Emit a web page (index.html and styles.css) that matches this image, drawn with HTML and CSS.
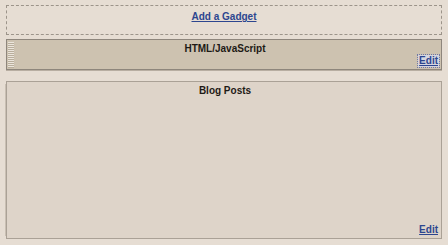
FILE: index.html
```html
<!DOCTYPE html>
<html lang="en">
<head>
    <meta charset="UTF-8">
    <title>Page Elements</title>
    <link rel="stylesheet" href="styles.css">
</head>
<body>
    <div class="layout">
        <div class="add-gadget">
            <a href="#">Add a Gadget</a>
        </div>
        <div class="widget widget-selected">
            <div class="widget-title">HTML/JavaScript</div>
            <a href="#" class="edit-link active">Edit</a>
        </div>
        <div class="widget widget-main">
            <div class="widget-title">Blog Posts</div>
            <a href="#" class="edit-link">Edit</a>
        </div>
    </div>
</body>
</html>
```

FILE: styles.css
```css
body {
    margin: 0;
    font-family: "Liberation Sans", Arial, sans-serif;
    font-size: 10px;
    font-weight: bold;
    background-color: #e6ddd3;
    color: #1e1a16;
}
.layout {
    padding: 5px 6px 0 6px;
}
.add-gadget {
    border: 1px dashed #9c948a;
    text-align: center;
    box-sizing: border-box;
    height: 30px;
    padding-top: 5px;
}
.add-gadget a {
    color: #2d468f;
    text-decoration: underline;
}
.widget {
    display: flex;
    flex-direction: column;
    box-sizing: border-box;
    padding: 3px 2px 2px 4px;
}
.widget-selected {
    margin-top: 4px;
    height: 31px;
    border: 1px solid #8e867c;
    box-shadow: 0 1px 0 #b8aea2;
    background: repeating-linear-gradient(to bottom, #ebe5dc 0, #ebe5dc 1px, #b9ae9c 1px, #b9ae9c 2px) 1px 2px / 6px 26px no-repeat, #cdc2b0;
}
.widget-main {
    margin-top: 11px;
    height: 158px;
    border: 1px solid #aaa196;
    box-shadow: 0 1px 0 #c9bfb3, -4px 0 0 -3px #c9bfb3;
    background-color: #ded4c9;
}
.widget-title {
    text-align: center;
    line-height: 12px;
}
.edit-link {
    margin-top: auto;
    align-self: flex-end;
    color: #2d468f;
    text-decoration: underline;
    line-height: 12px;
    padding: 0 1px;
}
.edit-link.active {
    background-color: #d6d6e0;
    outline: 1px dotted #6f78a6;
}
```
